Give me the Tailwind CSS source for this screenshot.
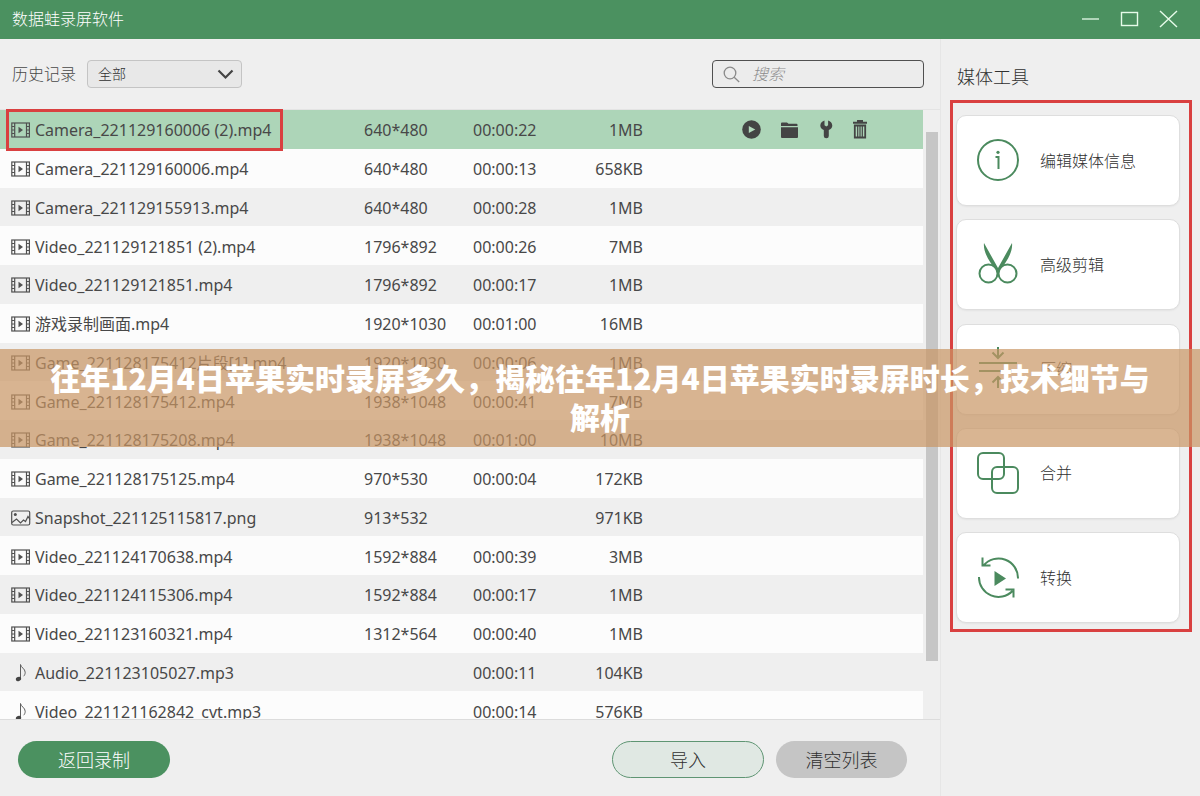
<!DOCTYPE html>
<html lang="zh-CN">
<head>
<meta charset="utf-8">
<meta name="viewport" content="width=device-width, initial-scale=1">
<title>数据蛙录屏软件</title>
<script src="https://cdn.jsdelivr.net/npm/@tailwindcss/browser@4"></script>
</head>
<body class="relative flex h-screen flex-col overflow-hidden bg-[#efefef] font-['Noto_Sans','Noto_Sans_CJK_SC',sans-serif] text-base text-[#484848]">

<svg class="hidden" aria-hidden="true">
  <symbol id="video" viewBox="0 0 20 20">
    <g fill="none" stroke="#505050" stroke-width="1.200"><rect x=".8" y="3" width="17.600" height="14"/><path d="M3.700 3v14M15.500 3v14"/><path d="M1 6.500h2.700M1 10h2.700M1 13.500h2.700M15.500 6.500h2.900M15.500 10h2.900M15.500 13.500h2.900"/></g>
    <path d="M7.500 6.700l4.500 3.300-4.500 3.300z" fill="#505050"/>
  </symbol>
  <symbol id="image" viewBox="0 0 20 20">
    <g fill="none" stroke="#505050" stroke-width="1.200"><rect x=".7" y="3" width="18" height="14" rx="1.500"/><path d="M1 14.500l4.500-3.500 4 4 3-3 2 1.500 2.500-5 2 3"/></g>
    <circle cx="4.300" cy="6.500" r="1.500" fill="#505050"/>
  </symbol>
  <symbol id="audio" viewBox="0 0 20 20">
    <path d="M9.500 16V1.500c.3 3 4.700 4.200 4.700 7.800 0 1.800-.8 3.200-1.500 3.900" fill="none" stroke="#606060" stroke-width="1"/>
    <ellipse cx="7.500" cy="16" rx="2.700" ry="2.100" transform="rotate(-20 7.500 16)" fill="#444"/>
  </symbol>
</svg>

<header class="flex h-[39px] shrink-0 items-center justify-between bg-[#4b9160] pr-[22px] pb-0.5 pl-3 text-white">
  <h1 class="text-base font-light">数据蛙录屏软件</h1>
  <div class="flex items-center gap-5">
    <button type="button" aria-label="最小化"><svg class="block size-[19px]" viewBox="0 0 19 19"><path d="M1 10h17" stroke="#e6fbe9" stroke-width="1.300"/></svg></button>
    <button type="button" aria-label="最大化"><svg class="block size-[19px]" viewBox="0 0 19 19"><rect x="1.500" y="3.500" width="16" height="13" fill="none" stroke="#e6fbe9" stroke-width="1.400"/></svg></button>
    <button type="button" aria-label="关闭"><svg class="block size-[19px]" viewBox="0 0 19 19"><path d="M1 2l17 16M18 2L1 18" stroke="#e6fbe9" stroke-width="1.400"/></svg></button>
  </div>
</header>

<div class="flex min-h-0 flex-1">
  <main class="flex min-w-0 flex-1 flex-col">
    <div class="flex h-[71px] shrink-0 items-center justify-between border-b border-[#e4e4e4] pr-4 pl-3">
      <div class="flex items-center gap-[11px]">
        <label for="filter" class="font-light">历史记录</label>
        <div class="relative">
          <select id="filter" class="h-7 w-[155px] appearance-none rounded border border-[#c4c4c4] bg-[#e8e8e8] pl-2.5 text-sm font-light text-[#303030]"><option>全部</option><option>视频</option><option>音频</option></select>
          <svg class="pointer-events-none absolute top-2 right-2 h-3 w-[17px]" viewBox="0 0 17 12"><path d="M1.500 2.500l7 7 7-7" fill="none" stroke="#444" stroke-width="2.200"/></svg>
        </div>
      </div>
      <label class="flex h-7 w-[212px] items-center gap-3 rounded border border-[#505050] bg-[#ececec] pl-2.5">
        <svg class="size-[17px]" viewBox="0 0 17 17" fill="none" stroke="#8a8a8a" stroke-width="1.300"><circle cx="7" cy="7" r="5.800"/><path d="M11.200 11.200l5 4.800"/></svg>
        <input type="search" aria-label="搜索" placeholder="搜索" class="h-6 min-w-0 flex-1 bg-transparent font-light italic outline-none placeholder:text-[#8c8c8c]">
      </label>
    </div>

    <div class="relative min-h-0 flex-1">
      <div class="flex h-full overflow-hidden">
        <table class="h-[620px] flex-1 table-fixed border-collapse whitespace-nowrap">
          <colgroup><col class="w-[364px]"><col class="w-[109px]"><col class="w-[90px]"><col class="w-20"><col></colgroup>
          <tbody id="files"></tbody>
        </table>
        <div class="w-[17px] shrink-0 pt-[22px] pl-[3px]"><div class="h-[529px] w-3 bg-[#c6c6c6]"></div></div>
      </div>
      <div class="pointer-events-none absolute -top-px left-1.5 h-[42px] w-[277px] border-[3px] border-[#d94040]"></div>
    </div>

    <div class="flex h-[77px] shrink-0 items-center justify-between border-t border-[#dcdcdc] pt-[3px] pr-[33px] pl-[18px] text-lg font-light">
      <button type="button" class="h-[37px] w-[152px] rounded-full bg-[#4b9160] leading-none text-white">返回录制</button>
      <div class="flex gap-3">
        <button type="button" class="h-[37px] w-[152px] rounded-full border border-[#5f9573] bg-[#e0e8e3] leading-none text-[#303030]">导入</button>
        <button type="button" class="h-[37px] w-[131px] rounded-full bg-[#c5c5c5] leading-none text-[#303030]">清空列表</button>
      </div>
    </div>
  </main>

  <aside class="w-[260px] shrink-0 border-l border-[#e6e6e6] pt-6 pr-2 pl-[9px] font-light text-[#303030]">
    <h2 class="pl-[7px] text-lg leading-7">媒体工具</h2>
    <div class="mt-[9px] flex h-[532px] flex-col justify-between border-[3px] border-[#d94040] pt-3 pr-[9px] pb-1.5 pl-[3px]">
      <button type="button" class="flex h-[91px] items-center gap-5 rounded-[10px] border border-[#dedede] bg-white pl-[19px] shadow-xs">
        <svg class="size-11" viewBox="0 0 44 44" fill="none" stroke="#4b8a5e" stroke-width="2"><circle cx="22" cy="21" r="20"/><path d="M19.500 18H22.500V30"/><circle cx="22" cy="13.300" r="1.600" fill="#4b8a5e" stroke="none"/></svg>
        <span>编辑媒体信息</span>
      </button>
      <button type="button" class="flex h-[91px] items-center gap-5 rounded-[10px] border border-[#dedede] bg-white pl-[19px] shadow-xs">
        <svg class="size-11" viewBox="0 0 44 44" fill="none" stroke="#4b8a5e" stroke-width="2"><circle cx="12.500" cy="30.500" r="9"/><circle cx="31.500" cy="30.500" r="9"/><path d="M8 0c-1 8 4 18 14 29 10-11 15-21 14-29L22 25z" fill="#4b8a5e" stroke="none"/></svg>
        <span>高级剪辑</span>
      </button>
      <button type="button" class="flex h-[91px] items-center gap-5 rounded-[10px] border border-[#dedede] bg-white pl-[19px] shadow-xs">
        <svg class="size-11" viewBox="0 0 44 44" fill="none" stroke="#4b8a5e" stroke-width="2"><path d="M3 16h38M3 24h38M22 0v11M16.500 5.500L22 11l5.500-5.500M22 41V30M16.500 35.500L22 30l5.500 5.500"/></svg>
        <span>压缩</span>
      </button>
      <button type="button" class="flex h-[91px] items-center gap-5 rounded-[10px] border border-[#dedede] bg-white pl-[19px] shadow-xs">
        <svg class="size-11" viewBox="0 0 44 44" fill="none" stroke="#4b8a5e" stroke-width="2"><rect x="2" y="2" width="26" height="26" rx="5"/><rect x="16" y="16" width="26" height="26" rx="5"/></svg>
        <span>合并</span>
      </button>
      <button type="button" class="flex h-[91px] items-center gap-5 rounded-[10px] border border-[#dedede] bg-white pl-[19px] shadow-xs">
        <svg class="size-11" viewBox="0 0 44 44" fill="none" stroke="#4b8a5e" stroke-width="2"><path d="M42 22.500A19.500 19.500 0 0 0 7.500 9.500M6.500 1.500V9.500H14.500M3 21A19.500 19.500 0 0 0 36.500 35M29.500 33.500H37.500V41.500"/><path d="M18.500 15L30 22.500 18.500 30z" fill="#4b8a5e" stroke="none"/></svg>
        <span>转换</span>
      </button>
    </div>
  </aside>
</div>

<div class="absolute inset-x-0 top-[349px] bg-[#c99664]/70 px-10 pt-[9px] pb-[11px] text-center font-['Noto_Sans_CJK_SC',sans-serif] text-[30px] leading-[39px] font-black text-white">往年12月4日苹果实时录屏多久，揭秘往年12月4日苹果实时录屏时长，技术细节与解析</div>

<script>
const files = [
  ['video', 'Camera_221129160006 (2).mp4', '640*480', '00:00:22', '1MB'],
  ['video', 'Camera_221129160006.mp4', '640*480', '00:00:13', '658KB'],
  ['video', 'Camera_221129155913.mp4', '640*480', '00:00:28', '1MB'],
  ['video', 'Video_221129121851 (2).mp4', '1796*892', '00:00:26', '7MB'],
  ['video', 'Video_221129121851.mp4', '1796*892', '00:00:17', '1MB'],
  ['video', '游戏录制画面.mp4', '1920*1030', '00:01:00', '16MB'],
  ['video', 'Game_221128175412片段[1].mp4', '1920*1030', '00:00:06', '1MB'],
  ['video', 'Game_221128175412.mp4', '1938*1048', '00:00:41', '7MB'],
  ['video', 'Game_221128175208.mp4', '1938*1048', '00:01:00', '10MB'],
  ['video', 'Game_221128175125.mp4', '970*530', '00:00:04', '172KB'],
  ['image', 'Snapshot_221125115817.png', '913*532', '', '971KB'],
  ['video', 'Video_221124170638.mp4', '1592*884', '00:00:39', '3MB'],
  ['video', 'Video_221124115306.mp4', '1592*884', '00:00:17', '1MB'],
  ['video', 'Video_221123160321.mp4', '1312*564', '00:00:40', '1MB'],
  ['audio', 'Audio_221123105027.mp3', '', '00:00:11', '104KB'],
  ['audio', 'Video_221121162842_cvt.mp3', '', '00:00:14', '576KB'],
];
const actions = `<div class="flex items-center gap-5 pl-[99px]">
  <button type="button" aria-label="播放"><svg class="block h-5 w-[19px]" viewBox="0 0 19 20"><circle cx="9.500" cy="9.500" r="9.300" fill="#444"/><path d="M6.800 6l6.500 3.500-6.500 3.500z" fill="#b3dabd"/></svg></button>
  <button type="button" aria-label="打开文件夹"><svg class="block h-5 w-[18px]" viewBox="0 0 18 20" fill="#444"><path d="M0 6V3.500q0-1 1-1h5l1.500 1.200h8q1 0 1 1V6zM0 7.200h17V17q0 1-1 1H1q-1 0-1-1z"/></svg></button>
  <button type="button" aria-label="修复"><svg class="block h-5 w-3.5" viewBox="0 0 14 20" fill="#444"><path d="M5.500 .5C3.300 1.200 1.300 3.100 1.300 5.500c0 2.200 1.300 3.700 3.500 4.600V16q0 2.300 2.500 2.300T9.800 16v-5.900c2.200-.9 3.500-2.400 3.500-4.600 0-2.400-2-4.300-4.200-5V5.200L7.300 6.500 5.500 5.200z"/></svg></button>
  <button type="button" aria-label="删除"><svg class="block h-5 w-3.5" viewBox="0 0 14 20"><path d="M0 2.700h14M4 1h6" stroke="#444" stroke-width="2"/><path d="M1.800 5.500h10.400V17.500H1.800z" fill="none" stroke="#444" stroke-width="1.800"/><path d="M4.700 6v11M7 6v11M9.300 6v11" stroke="#444" stroke-width="1.200"/></svg></button>
</div>`;
document.getElementById('files').innerHTML = files.map(([kind, name, resolution, duration, size], i) => `
  <tr class="${i === 0 ? 'bg-[#add5b8]' : i % 2 ? 'bg-[#fcfcfc]' : 'bg-[#efefef]'}">
    <td class="p-0 pt-0.5 pl-[11px]"><div class="flex items-center gap-1"><svg class="size-5"><use href="#${kind}"/></svg><span>${name}</span></div></td>
    <td class="p-0 pt-0.5">${resolution}</td>
    <td class="p-0 pt-0.5">${duration}</td>
    <td class="p-0 pt-0.5 text-right">${size}</td>
    <td class="p-0 pt-0.5">${i === 0 ? actions : ''}</td>
  </tr>`).join('');
</script>
</body>
</html>
